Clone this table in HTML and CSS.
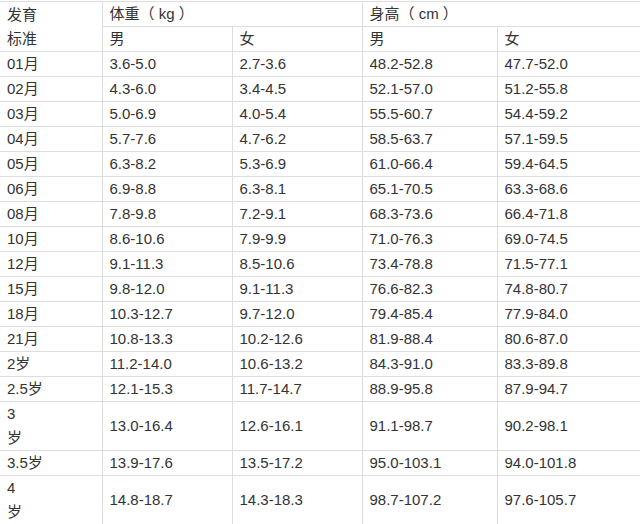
FILE: index.html
```html
<!DOCTYPE html>
<html lang="zh-CN">
<head>
<meta charset="utf-8">
<title>发育标准</title>
<link rel="stylesheet" href="styles.css">
</head>
<body>
<table class="growth">
  <colgroup>
    <col class="c-age">
    <col class="c-num">
    <col class="c-num">
    <col class="c-h1">
    <col class="c-h2">
  </colgroup>
  <thead>
    <tr>
      <th rowspan="2">发育<br>标准</th>
      <th colspan="2">体重（ kg ）</th>
      <th colspan="2" class="last">身高（ cm ）</th>
    </tr>
    <tr>
      <th>男</th><th>女</th><th>男</th><th class="last">女</th>
    </tr>
  </thead>
  <tbody>
    <tr><td>01月</td><td>3.6-5.0</td><td>2.7-3.6</td><td>48.2-52.8</td><td class="last">47.7-52.0</td></tr>
    <tr><td>02月</td><td>4.3-6.0</td><td>3.4-4.5</td><td>52.1-57.0</td><td class="last">51.2-55.8</td></tr>
    <tr><td>03月</td><td>5.0-6.9</td><td>4.0-5.4</td><td>55.5-60.7</td><td class="last">54.4-59.2</td></tr>
    <tr><td>04月</td><td>5.7-7.6</td><td>4.7-6.2</td><td>58.5-63.7</td><td class="last">57.1-59.5</td></tr>
    <tr><td>05月</td><td>6.3-8.2</td><td>5.3-6.9</td><td>61.0-66.4</td><td class="last">59.4-64.5</td></tr>
    <tr><td>06月</td><td>6.9-8.8</td><td>6.3-8.1</td><td>65.1-70.5</td><td class="last">63.3-68.6</td></tr>
    <tr><td>08月</td><td>7.8-9.8</td><td>7.2-9.1</td><td>68.3-73.6</td><td class="last">66.4-71.8</td></tr>
    <tr><td>10月</td><td>8.6-10.6</td><td>7.9-9.9</td><td>71.0-76.3</td><td class="last">69.0-74.5</td></tr>
    <tr><td>12月</td><td>9.1-11.3</td><td>8.5-10.6</td><td>73.4-78.8</td><td class="last">71.5-77.1</td></tr>
    <tr><td>15月</td><td>9.8-12.0</td><td>9.1-11.3</td><td>76.6-82.3</td><td class="last">74.8-80.7</td></tr>
    <tr><td>18月</td><td>10.3-12.7</td><td>9.7-12.0</td><td>79.4-85.4</td><td class="last">77.9-84.0</td></tr>
    <tr><td>21月</td><td>10.8-13.3</td><td>10.2-12.6</td><td>81.9-88.4</td><td class="last">80.6-87.0</td></tr>
    <tr><td>2岁</td><td>11.2-14.0</td><td>10.6-13.2</td><td>84.3-91.0</td><td class="last">83.3-89.8</td></tr>
    <tr><td>2.5岁</td><td>12.1-15.3</td><td>11.7-14.7</td><td>88.9-95.8</td><td class="last">87.9-94.7</td></tr>
    <tr><td>3<br>岁</td><td>13.0-16.4</td><td>12.6-16.1</td><td>91.1-98.7</td><td class="last">90.2-98.1</td></tr>
    <tr><td>3.5岁</td><td>13.9-17.6</td><td>13.5-17.2</td><td>95.0-103.1</td><td class="last">94.0-101.8</td></tr>
    <tr><td>4<br>岁</td><td>14.8-18.7</td><td>14.3-18.3</td><td>98.7-107.2</td><td class="last">97.6-105.7</td></tr>
  </tbody>
</table>
</body>
</html>
```
FILE: styles.css
```css
html, body {
  margin: 0;
  padding: 0;
  background: #ffffff;
  overflow: hidden;
}

body {
  padding-top: 1px;
  font-family: "Liberation Sans", "Noto Sans CJK SC", sans-serif;
  font-size: 15px;
  color: #333333;
}

.growth {
  width: 640px;
  border-collapse: collapse;
  table-layout: fixed;
}

.c-age { width: 102px; }
.c-num { width: 130px; }
.c-h1 { width: 135px; }
.c-h2 { width: 143px; }

.growth th,
.growth td {
  border: 1px solid #dedede;
  padding: 0 7px;
  height: 24px;
  line-height: 24px;
  text-align: left;
  font-weight: normal;
  vertical-align: middle;
  white-space: nowrap;
}

.growth tr > :first-child {
  border-left: none;
}

.growth .last {
  border-right: none;
}
```
